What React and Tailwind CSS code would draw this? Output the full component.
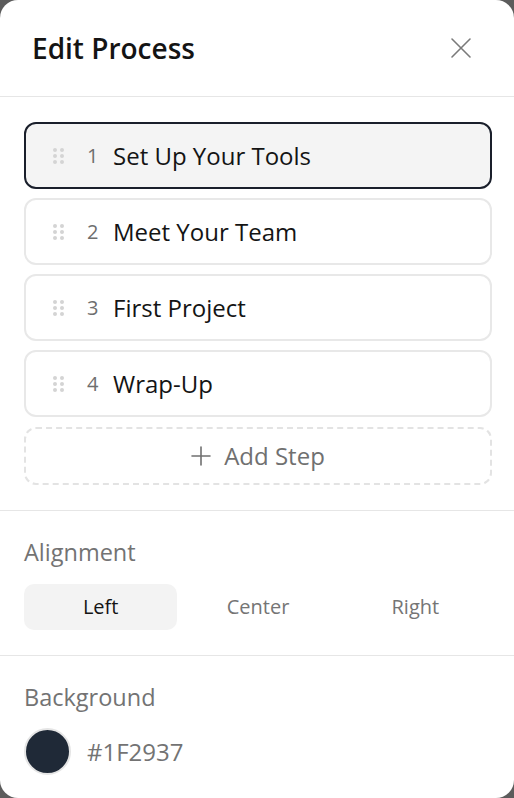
import React from "react";

const steps = [
  { n: 1, title: "Set Up Your Tools", active: true },
  { n: 2, title: "Meet Your Team" },
  { n: 3, title: "First Project" },
  { n: 4, title: "Wrap-Up" },
];

function Grip() {
  return (
    <div className="grid grid-cols-2 gap-x-[3px] gap-y-[2px] w-[11px]">
      {[0, 1, 2, 3, 4, 5].map((i) => (
        <span key={i} className="block w-[4px] h-[4px] rounded-full bg-[#d4d4d4]" />
      ))}
    </div>
  );
}

export default function App() {
  return (
    <div className="min-h-screen bg-[#5c5c5c]" style={{ fontFamily: '"Open Sans", "Noto Sans", sans-serif' }}>
      <div className="w-[514px] h-[798px] bg-white rounded-[18px] overflow-hidden flex flex-col">
        <div className="h-[97px] shrink-0 border-b border-[#e6e6e6] flex items-center justify-between pl-[32px] pr-[42px]">
          <h1 className="text-[28px] font-semibold text-[#141414] leading-none">Edit Process</h1>
          <svg width="22" height="22" viewBox="0 0 22 22" fill="none" stroke="#7a7a7a" strokeWidth="1.6" strokeLinecap="round">
            <path d="M2 2L20 20M20 2L2 20" />
          </svg>
        </div>

        <div className="pl-6 pr-[22px] pt-[25px] pb-[25px] border-b border-[#e6e6e6] flex flex-col gap-[9px]">
          {steps.map((s) => (
            <div
              key={s.n}
              className={
                s.active
                  ? "h-[67px] rounded-[12px] border-2 border-[#1a1f2b] bg-[#f4f4f4] flex items-center pl-[27px]"
                  : "h-[67px] rounded-[12px] border-2 border-[#e8e8e8] bg-white flex items-center pl-[27px]"
              }
            >
              <Grip />
              <span className="ml-[23px] w-[14px] text-[20px] leading-[28px] text-[#6e6e6e]">{s.n}</span>
              <span className="ml-[12px] text-[24px] leading-[32px] text-[#141414]">{s.title}</span>
            </div>
          ))}
          <div className="h-[58px] mt-[1px] rounded-[12px] border-2 border-dashed border-[#e3e3e3] flex items-center justify-center gap-[13px] text-[#707070]">
            <svg width="20" height="20" viewBox="0 0 20 20" fill="none" stroke="#707070" strokeWidth="1.6" strokeLinecap="round">
              <path d="M10 1V19M1 10H19" />
            </svg>
            <span className="text-[24px] leading-[32px]">Add Step</span>
          </div>
        </div>

        <div className="pl-6 pr-[22px] pt-[25px] pb-[25px] border-b border-[#e6e6e6]">
          <div className="text-[23.5px] leading-[32px] text-[#737373]">Alignment</div>
          <div className="mt-[16px] grid grid-cols-3 gap-1">
            <div className="h-[46px] rounded-[10px] bg-[#f3f3f3] flex items-center justify-center text-[20px] text-[#141414]">Left</div>
            <div className="h-[46px] rounded-[10px] flex items-center justify-center text-[20px] text-[#757575]">Center</div>
            <div className="h-[46px] rounded-[10px] flex items-center justify-center text-[20px] text-[#757575]">Right</div>
          </div>
        </div>

        <div className="px-6 pt-[25px]">
          <div className="text-[23.5px] leading-[32px] text-[#737373]">Background</div>
          <div className="mt-[15px] flex items-center">
            <div className="w-[47px] h-[47px] rounded-full bg-[#1f2937] border-2 border-[#e5e5e5]" />
            <span className="ml-[16px] text-[24px] leading-[32px] text-[#737373]">#1F2937</span>
          </div>
        </div>
      </div>
    </div>
  );
}
